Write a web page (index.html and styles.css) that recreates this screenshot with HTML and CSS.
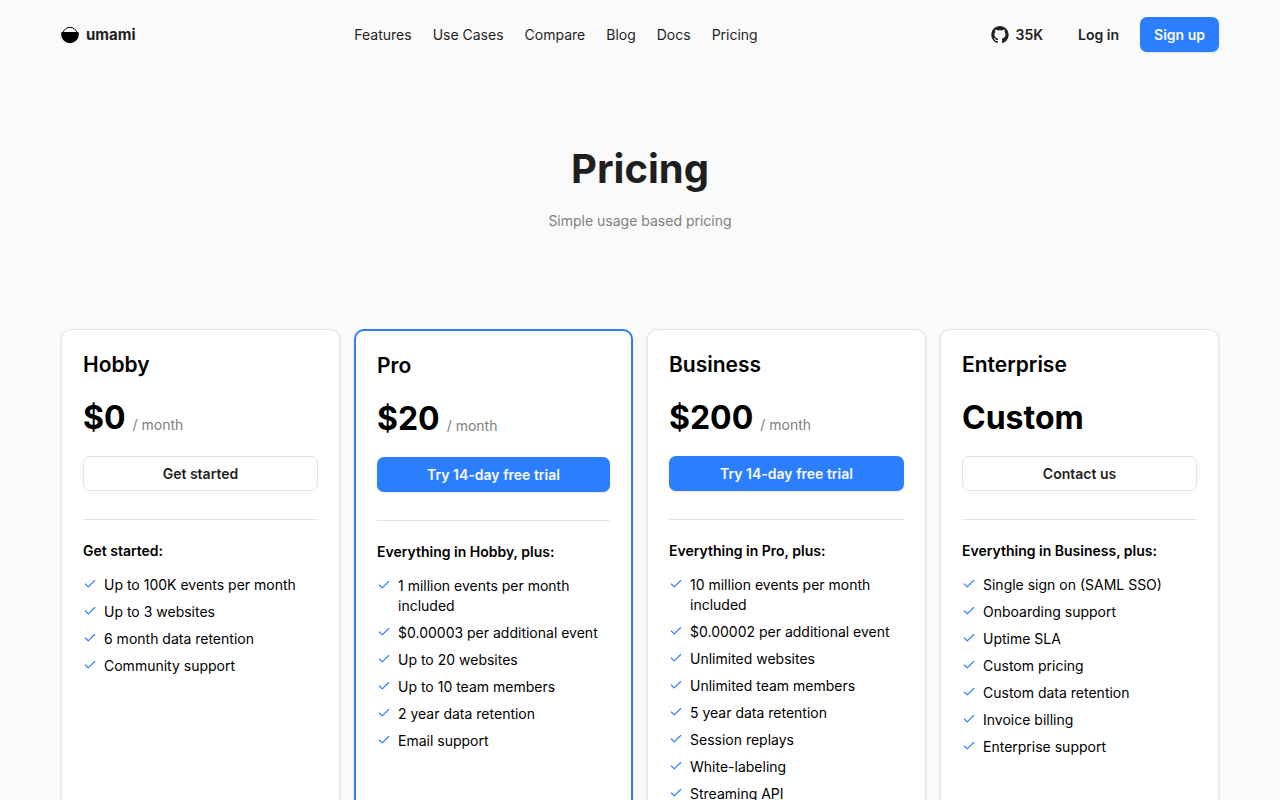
FILE: index.html
```
<!DOCTYPE html>
<html lang="en">
<head>
    <meta charset="UTF-8">
    <meta name="viewport" content="width=device-width, initial-scale=1.0">
    <title>Pricing - Umami</title>
    <link rel="stylesheet" href="styles.css">
</head>
<body>
    <svg class="sprite" aria-hidden="true">
        <symbol id="check" viewBox="0 0 24 24">
            <path d="M20 6 9 17l-5-5" fill="none" stroke="currentColor" stroke-width="2" stroke-linecap="round" stroke-linejoin="round"/>
        </symbol>
    </svg>

    <header class="header container">
        <a class="logo" href="#">
            <svg width="18" height="18" viewBox="0 0 18 18" aria-hidden="true">
                <path d="M2 6.6C3.2 3.4 5.8 1.3 9 1.3s5.8 2.1 7 5.3" fill="none" stroke="#000" stroke-width="1"/>
                <path d="M.2 6.9a.8.8 0 0 1 .8-.8h16a.8.8 0 0 1 .8.8v1.5a8.8 8.8 0 0 1-17.6 0z"/>
            </svg>
            <span>umami</span>
        </a>
        <nav class="nav">
            <a href="#">Features</a>
            <a href="#">Use Cases</a>
            <a href="#">Compare</a>
            <a href="#">Blog</a>
            <a href="#">Docs</a>
            <a href="#">Pricing</a>
        </nav>
        <div class="actions">
            <a class="btn" href="#">
                <svg width="18" height="17" viewBox="0 0 98 96" fill="currentColor" aria-hidden="true">
                    <path fill-rule="evenodd" d="M48.854 0C21.839 0 0 22 0 49.217c0 21.756 13.993 40.172 33.405 46.69 2.427.49 3.316-1.059 3.316-2.362 0-1.141-.08-5.052-.08-9.127-13.59 2.934-16.42-5.867-16.42-5.867-2.184-5.704-5.42-7.17-5.42-7.17-4.448-3.015.324-3.015.324-3.015 4.934.326 7.523 5.052 7.523 5.052 4.367 7.496 11.404 5.378 14.235 4.074.404-3.178 1.699-5.378 3.074-6.6-10.839-1.141-22.243-5.378-22.243-24.283 0-5.378 1.94-9.778 5.014-13.2-.485-1.222-2.184-6.275.486-13.038 0 0 4.125-1.304 13.426 5.052a46.97 46.97 0 0 1 12.214-1.63c4.125 0 8.33.571 12.213 1.63 9.302-6.356 13.427-5.052 13.427-5.052 2.67 6.763.97 11.816.485 13.038 3.155 3.422 5.015 7.822 5.015 13.2 0 18.905-11.404 23.06-22.324 24.283 1.78 1.548 3.316 4.481 3.316 9.126 0 6.6-.08 11.897-.08 13.526 0 1.304.89 2.853 3.316 2.364 19.412-6.52 33.405-24.935 33.405-46.691C97.707 22 75.788 0 48.854 0z"/>
                </svg>
                35K
            </a>
            <a class="btn" href="#">Log in</a>
            <a class="btn btn-primary" href="#">Sign up</a>
        </div>
    </header>

    <main class="container">
        <div class="hero">
            <h1>Pricing</h1>
            <p>Simple usage based pricing</p>
        </div>

        <div class="plans">
            <section class="card">
                <h2>Hobby</h2>
                <div class="price"><strong>$0</strong><span>/ month</span></div>
                <a class="btn btn-outline" href="#">Get started</a>
                <div class="features">
                    <h3>Get started:</h3>
                    <ul>
                        <li><svg><use href="#check"/></svg>Up to 100K events per month</li>
                        <li><svg><use href="#check"/></svg>Up to 3 websites</li>
                        <li><svg><use href="#check"/></svg>6 month data retention</li>
                        <li><svg><use href="#check"/></svg>Community support</li>
                    </ul>
                </div>
            </section>

            <section class="card card-active">
                <h2>Pro</h2>
                <div class="price"><strong>$20</strong><span>/ month</span></div>
                <a class="btn btn-primary" href="#">Try 14-day free trial</a>
                <div class="features">
                    <h3>Everything in Hobby, plus:</h3>
                    <ul>
                        <li><svg><use href="#check"/></svg>1 million events per month included</li>
                        <li><svg><use href="#check"/></svg>$0.00003 per additional event</li>
                        <li><svg><use href="#check"/></svg>Up to 20 websites</li>
                        <li><svg><use href="#check"/></svg>Up to 10 team members</li>
                        <li><svg><use href="#check"/></svg>2 year data retention</li>
                        <li><svg><use href="#check"/></svg>Email support</li>
                    </ul>
                </div>
            </section>

            <section class="card">
                <h2>Business</h2>
                <div class="price"><strong>$200</strong><span>/ month</span></div>
                <a class="btn btn-primary" href="#">Try 14-day free trial</a>
                <div class="features">
                    <h3>Everything in Pro, plus:</h3>
                    <ul>
                        <li><svg><use href="#check"/></svg>10 million events per month included</li>
                        <li><svg><use href="#check"/></svg>$0.00002 per additional event</li>
                        <li><svg><use href="#check"/></svg>Unlimited websites</li>
                        <li><svg><use href="#check"/></svg>Unlimited team members</li>
                        <li><svg><use href="#check"/></svg>5 year data retention</li>
                        <li><svg><use href="#check"/></svg>Session replays</li>
                        <li><svg><use href="#check"/></svg>White-labeling</li>
                        <li><svg><use href="#check"/></svg>Streaming API</li>
                    </ul>
                </div>
            </section>

            <section class="card">
                <h2>Enterprise</h2>
                <div class="price"><strong>Custom</strong></div>
                <a class="btn btn-outline" href="#">Contact us</a>
                <div class="features">
                    <h3>Everything in Business, plus:</h3>
                    <ul>
                        <li><svg><use href="#check"/></svg>Single sign on (SAML SSO)</li>
                        <li><svg><use href="#check"/></svg>Onboarding support</li>
                        <li><svg><use href="#check"/></svg>Uptime SLA</li>
                        <li><svg><use href="#check"/></svg>Custom pricing</li>
                        <li><svg><use href="#check"/></svg>Custom data retention</li>
                        <li><svg><use href="#check"/></svg>Invoice billing</li>
                        <li><svg><use href="#check"/></svg>Enterprise support</li>
                    </ul>
                </div>
            </section>
        </div>
    </main>
</body>
</html>
```
FILE: styles.css
```
* {
    box-sizing: border-box;
    margin: 0;
    padding: 0;
}

body {
    background-color: #fafafa;
    color: #000;
    font-family: Inter, "Liberation Sans", sans-serif;
    font-size: 14px;
    line-height: 20px;
}

a {
    color: #1f1f1f;
    text-decoration: none;
}

.sprite {
    display: none;
}

.container {
    max-width: 1200px;
    margin: 0 auto;
    padding: 0 21px;
}

/* header */
.header {
    display: flex;
    align-items: center;
    justify-content: space-between;
    height: 69px;
}

.logo {
    display: flex;
    align-items: center;
    gap: 7px;
    font-size: 15px;
    font-weight: 700;
}

.nav {
    display: flex;
    gap: 21px;
}

.actions {
    display: flex;
    gap: 7px;
}

.btn {
    display: flex;
    align-items: center;
    justify-content: center;
    gap: 7px;
    height: 35px;
    padding: 0 14px;
    border-radius: 7px;
    font-weight: 600;
}

.btn-primary {
    background-color: #2b7fff;
    color: #fafafa;
    box-shadow: 0 1px 2px rgba(0, 0, 0, 0.1);
}

.btn-outline {
    background-color: #fff;
    border: 1px solid #e4e4e4;
}

/* title */
.hero {
    padding: 79px 0 98px;
    text-align: center;
}

.hero h1 {
    color: #1f1f1f;
    font-size: 40px;
    font-weight: 700;
    line-height: 42px;
}

.hero p {
    margin-top: 21px;
    color: #808080;
}

/* plans */
.plans {
    display: grid;
    grid-template-columns: repeat(4, 1fr);
    gap: 14px;
    padding-bottom: 56px;
}

.card {
    padding: 21px;
    background-color: #fff;
    border: 1px solid #e4e4e4;
    border-radius: 10px;
    box-shadow: 0 1px 3px rgba(0, 0, 0, 0.1);
}

.card-active {
    border: 2px solid #3080e8;
}

.card h2 {
    font-size: 21px;
    font-weight: 600;
    line-height: 28px;
}

.price {
    display: flex;
    align-items: flex-end;
    gap: 7px;
    margin: 21px 0;
}

.price strong {
    font-size: 32px;
    font-weight: 700;
    line-height: 35px;
}

.price span {
    color: #808080;
}

.features {
    margin-top: 28px;
    padding-top: 21px;
    border-top: 1px solid #e4e4e4;
}

.features h3 {
    margin-bottom: 14px;
    font-size: 14px;
    font-weight: 600;
}

.features ul {
    display: flex;
    flex-direction: column;
    gap: 7px;
    list-style: none;
}

.features li {
    display: flex;
    gap: 7px;
}

.features svg {
    flex-shrink: 0;
    width: 14px;
    height: 14px;
    margin-top: 2px;
    color: #2b7fff;
}

@media (max-width: 900px) {
    .plans {
        grid-template-columns: repeat(2, 1fr);
    }

    .nav {
        display: none;
    }
}
```
